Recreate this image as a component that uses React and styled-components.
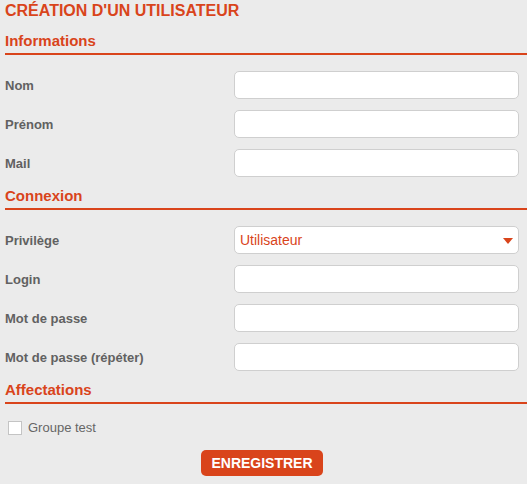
import React, { useState } from 'react';
import styled, { createGlobalStyle } from 'styled-components';

const GlobalStyle = createGlobalStyle`
  html, body {
    margin: 0;
    background: #ebebeb;
  }
  body {
    font-family: 'Liberation Sans', Arial, sans-serif;
  }
`;

const ORANGE = '#d9441b';

const Page = styled.form`
  width: 527px;
  box-sizing: border-box;
  padding: 2px 0 0 5px;
`;

const Title = styled.h1`
  margin: 0 0 12px;
  font-size: 16px;
  line-height: 18px;
  font-weight: bold;
  color: ${ORANGE};
`;

const Section = styled.section`
  margin-bottom: 10px;
`;

const SectionTitle = styled.h2`
  margin: 0 0 16px;
  padding-bottom: 3px;
  font-size: 15px;
  line-height: 18px;
  font-weight: bold;
  color: ${ORANGE};
  border-bottom: 2px solid ${ORANGE};
`;

const Row = styled.div`
  display: grid;
  grid-template-columns: 229px 285px;
  align-items: center;
  margin-bottom: 11px;

  &:last-child {
    margin-bottom: 0;
  }
`;

const Label = styled.label`
  font-size: 13px;
  font-weight: bold;
  color: #616161;
`;

const Input = styled.input`
  box-sizing: border-box;
  width: 285px;
  height: 28px;
  margin: 0;
  padding: 0 6px;
  border: 1px solid #cfcfcf;
  border-radius: 5px;
  background: #fff;
  font-family: inherit;
  font-size: 14px;
  outline: none;
`;

const SelectWrap = styled.div`
  position: relative;
  width: 285px;
  height: 28px;
`;

const Select = styled.select`
  box-sizing: border-box;
  width: 100%;
  height: 28px;
  margin: 0;
  padding: 0 24px 0 5px;
  border: 1px solid #cfcfcf;
  border-radius: 5px;
  background: #fff;
  color: ${ORANGE};
  font-family: inherit;
  font-size: 14px;
  appearance: none;
  outline: none;
`;

const Caret = styled.span`
  position: absolute;
  right: 6px;
  top: 12px;
  width: 0;
  height: 0;
  border-left: 5px solid transparent;
  border-right: 5px solid transparent;
  border-top: 6px solid ${ORANGE};
  pointer-events: none;
`;

const CheckRow = styled.label`
  display: flex;
  align-items: center;
  gap: 6px;
  margin: 15px 0 0 3px;
  font-size: 13px;
  color: #666;
`;

const Box = styled.span`
  box-sizing: border-box;
  width: 14px;
  height: 14px;
  border: 1px solid #c4c4c4;
  background: #fff;
`;

const Actions = styled.div`
  display: flex;
  justify-content: center;
  padding-right: 8px;
  margin-top: 15px;
`;

const Button = styled.button`
  height: 26px;
  padding: 0 10px;
  border: none;
  border-radius: 5px;
  background: ${ORANGE};
  color: #fff;
  font-family: inherit;
  font-size: 14px;
  font-weight: bold;
  cursor: pointer;
`;

const Field = ({ label, type = 'text' }) => (
  <Row>
    <Label>{label}</Label>
    <Input type={type} />
  </Row>
);

const App = () => {
  const [privilege, setPrivilege] = useState('user');

  return (
    <>
      <GlobalStyle />
      <Page onSubmit={(e) => e.preventDefault()}>
        <Title>CRÉATION D'UN UTILISATEUR</Title>

        <Section>
          <SectionTitle>Informations</SectionTitle>
          <Field label="Nom" />
          <Field label="Prénom" />
          <Field label="Mail" />
        </Section>

        <Section>
          <SectionTitle>Connexion</SectionTitle>
          <Row>
            <Label>Privilège</Label>
            <SelectWrap>
              <Select
                value={privilege}
                onChange={(e) => setPrivilege(e.target.value)}
              >
                <option value="user">Utilisateur</option>
                <option value="admin">Administrateur</option>
              </Select>
              <Caret />
            </SelectWrap>
          </Row>
          <Field label="Login" />
          <Field label="Mot de passe" type="password" />
          <Field label="Mot de passe (répéter)" type="password" />
        </Section>

        <Section>
          <SectionTitle>Affectations</SectionTitle>
          <CheckRow>
            <Box />
            Groupe test
          </CheckRow>
        </Section>

        <Actions>
          <Button type="submit">ENREGISTRER</Button>
        </Actions>
      </Page>
    </>
  );
};

export default App;
